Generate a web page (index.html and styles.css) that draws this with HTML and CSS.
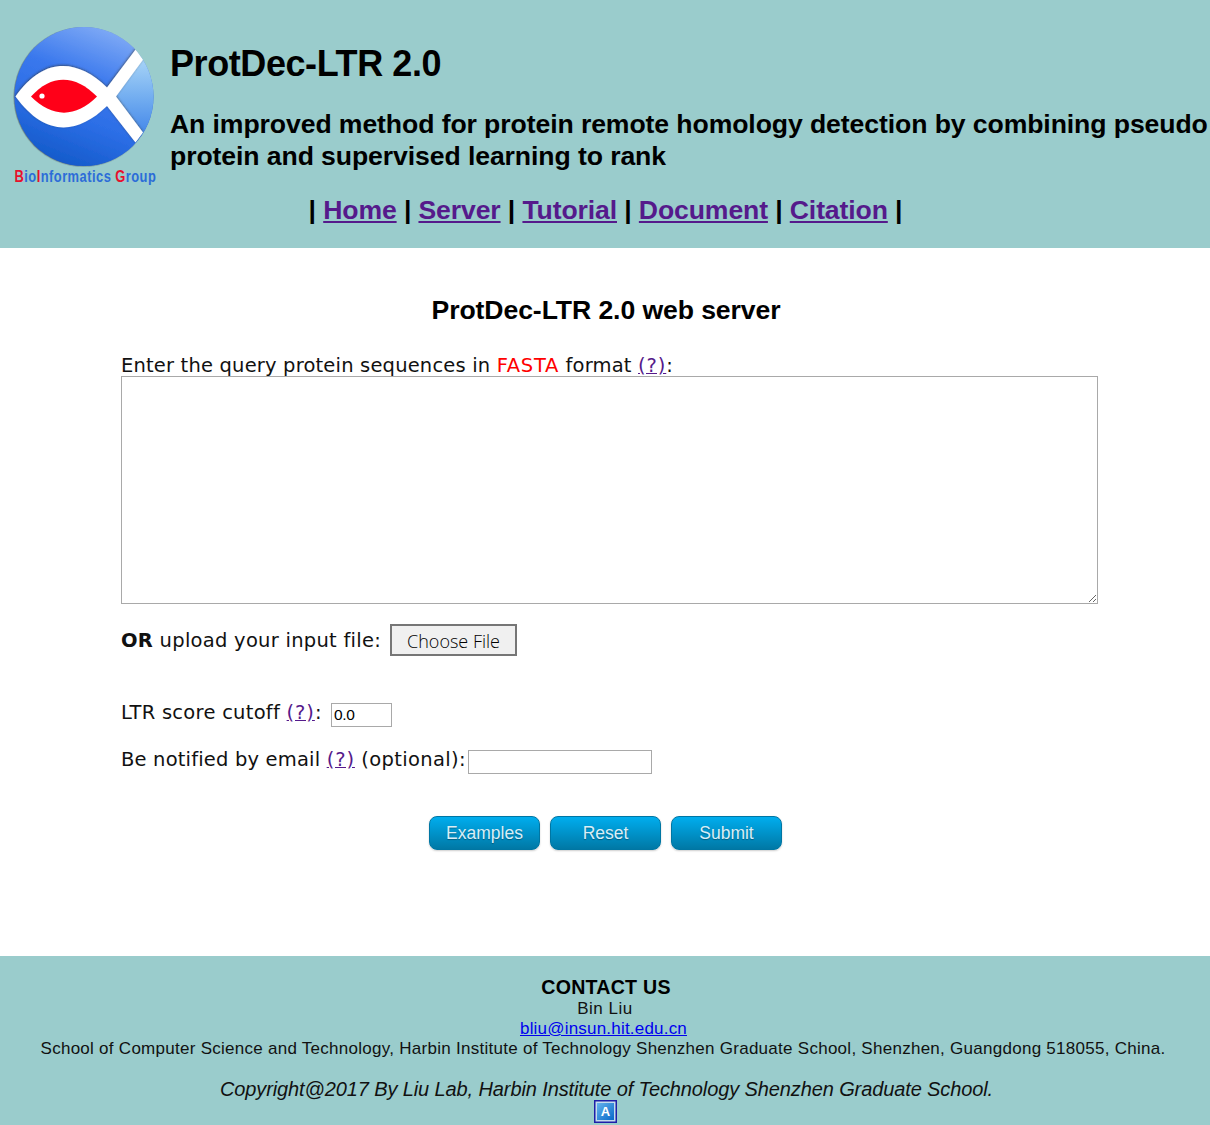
FILE: index.html
```html
<!DOCTYPE html>
<html lang="en">
<head>
<meta charset="utf-8">
<title>ProtDec-LTR 2.0</title>
<link rel="stylesheet" href="styles.css">
</head>
<body>
<header class="header">
  <div class="banner">
    <svg class="logo" viewBox="0 0 156 172" width="156" height="172" role="img" aria-label="BioInformatics Group">
      <defs>
        <linearGradient id="globe" x1="0.7" y1="0" x2="0.3" y2="1">
          <stop offset="0" stop-color="#82acf6"/>
          <stop offset="0.38" stop-color="#3a78ed"/>
          <stop offset="0.65" stop-color="#2c6ee6"/>
          <stop offset="1" stop-color="#1259c8"/>
        </linearGradient>
        <linearGradient id="sea" x1="0" y1="0" x2="0" y2="1">
          <stop offset="0" stop-color="#a9d5f7"/>
          <stop offset="0.5" stop-color="#72adf0"/>
          <stop offset="1" stop-color="#3f83e8"/>
        </linearGradient>
        <clipPath id="disc"><circle cx="84" cy="76.500" r="69.5"/></clipPath>
        <filter id="soft" x="-10%" y="-10%" width="120%" height="120%"><feDropShadow dx="-0.3" dy="-0.8" stdDeviation="0.8" flood-color="#333" flood-opacity="0.7"/></filter>
        <filter id="edge" x="-10%" y="-10%" width="120%" height="120%"><feDropShadow dx="-0.5" dy="0.3" stdDeviation="0.6" flood-color="#333" flood-opacity="0.8"/></filter>
      </defs>
      <circle cx="84" cy="76.500" r="69.5" fill="url(#globe)" filter="url(#edge)"/>
      <g clip-path="url(#disc)">
        <path d="M115 77 143 38H160V118H143Z" fill="url(#sea)"/>
        <g filter="url(#soft)">
          <path d="M15.500 76.500C43 37 77 38 107 67.500L136 29 143.500 39 116 76.500 143 112.500 135.500 122.500 107 86C77 115 45 117 15.500 76.500Z" fill="#fff"/>
        </g>
        <path d="M31 76.500C51 54 75 54 97 76.500C76 98 52 98 31 76.500Z" fill="#ff0018"/>
        <circle cx="42" cy="76" r="2.600" fill="#fff"/>
      </g>
      <text class="logo-text" transform="translate(14.500 161.500) scale(0.76 1)" x="0" y="0" textLength="186" lengthAdjust="spacing"><tspan class="red">B</tspan>io<tspan class="red">I</tspan>nformatics <tspan class="red">G</tspan>roup</text>
    </svg>
    <div class="titles">
      <h1 class="title">ProtDec-LTR 2.0</h1>
      <h2 class="subtitle">An improved method for protein remote homology detection by combining pseudo<br>protein and supervised learning to rank</h2>
    </div>
  </div>
  <nav class="nav">| <a href="#">Home</a> | <a href="#">Server</a> | <a href="#">Tutorial</a> | <a href="#">Document</a> | <a href="#">Citation</a> |</nav>
</header>
<main class="main">
  <h2 class="heading">ProtDec-LTR 2.0 web server</h2>
  <form class="form">
    <label class="row row-query" for="query"><span>Enter the query protein sequences in <span class="fasta">FASTA</span> format <a href="#">(?)</a>:</span></label>
    <textarea class="query" id="query"></textarea>
    <div class="row row-file"><span class="t-file"><b>OR</b> upload your input file:</span><button class="choose" type="button">Choose File</button></div>
    <div class="row row-cutoff"><span class="t-cutoff">LTR score cutoff <a href="#">(?)</a>:</span><input class="cutoff" value="0.0"></div>
    <div class="row row-email"><span class="t-email">Be notified by email <a href="#">(?)</a> <span class="optional">(optional):</span></span><input class="email"></div>
    <div class="actions">
      <button class="btn" type="button">Examples</button>
      <button class="btn" type="button">Reset</button>
      <button class="btn" type="button">Submit</button>
    </div>
  </form>
</main>
<footer class="footer">
  <div class="contact">CONTACT US</div>
  <div class="line name">Bin Liu</div>
  <div class="line mail"><a href="#">bliu@insun.hit.edu.cn</a></div>
  <div class="line school">School of Computer Science and Technology, Harbin Institute of Technology Shenzhen Graduate School, Shenzhen, Guangdong 518055, China.</div>
  <div class="copy">Copyright@2017 By Liu Lab, Harbin Institute of Technology Shenzhen Graduate School.</div>
  <svg class="badge" width="23" height="23" viewBox="0 0 23 23">
    <defs><linearGradient id="tile" x1="0" y1="0" x2="1" y2="1"><stop offset="0" stop-color="#64b2ec"/><stop offset="1" stop-color="#0868c9"/></linearGradient></defs>
    <rect x="0.750" y="0.750" width="21.500" height="21.500" fill="#c5dced" stroke="#1e1ea8" stroke-width="1.500"/>
    <rect x="3" y="3" width="17" height="17" fill="url(#tile)"/>
    <text class="badge-text" x="11.500" y="16" text-anchor="middle">A</text>
  </svg>
</footer>
</body>
</html>
```
FILE: styles.css
```css
* { box-sizing: border-box; }
body {
  margin: 0;
  min-height: 1125px;
  display: flex;
  flex-direction: column;
  background: #fff;
  color: #000;
  font-family: "Liberation Sans", Arial, sans-serif;
}
h1, h2 { margin: 0; font-weight: bold; }
a { color: #551a8b; text-decoration: underline; }
.header { height: 248px; background: #9acccc; overflow: hidden; }
.banner { display: flex; height: 190px; padding-top: 20px; }
.logo { flex: none; }
.logo-text { font: bold 17px "Liberation Sans", Arial, sans-serif; fill: #2c6cd8; }
.red { fill: #e8102c; }
.titles { padding: 23px 0 0 14px; white-space: nowrap; }
.title { font-size: 36px; line-height: 42px; letter-spacing: -0.42px; }
.subtitle { margin-top: 23px; font-size: 26.600px; line-height: 32px; letter-spacing: -0.09px; }
.nav { height: 40px; padding-left: 1px; text-align: center; font-weight: bold; font-size: 26.600px; line-height: 40px; letter-spacing: -0.12px; }
.main { height: 708px; padding: 46px 0 0 121px; }
.heading { margin-left: -121px; padding-left: 2px; text-align: center; font-size: 26.600px; line-height: 32px; letter-spacing: -0.09px; }
.form { width: 977px; font-family: "DejaVu Sans", Verdana, sans-serif; font-size: 19.500px; }
.form a { letter-spacing: 0.9px; }
.row { display: flex; align-items: center; white-space: nowrap; color: #111; }
.row-query { margin-top: 28px; height: 23px; letter-spacing: 0.18px; }
.fasta { color: #f00; letter-spacing: 0.7px; }
.query { display: block; width: 977px; height: 228px; margin: -1px 0 0; border: 1.500px solid #a9a9a9; resize: both; outline: 0; }
.row-file { height: 32px; margin-top: 20px; }
.t-file { width: 269px; letter-spacing: 0.27px; }
.choose { width: 127px; height: 32px; padding: 1px 0 0; border: 2px solid #767676; background: #f0f0f0; font: 300 18px "Open Sans", sans-serif; letter-spacing: 0; }
.row-cutoff { height: 24px; margin-top: 47px; }
.t-cutoff { width: 210px; padding-bottom: 5px; letter-spacing: 0.27px; }
.cutoff, .email { height: 24px; border: 1.500px solid #a9a9a9; padding: 0 2px; font: 15.500px "Liberation Sans", Arial, sans-serif; letter-spacing: -0.3px; border-radius: 0; }
.cutoff { width: 61px; }
.row-email { height: 24px; margin-top: 23px; }
.t-email { width: 347px; padding-bottom: 5px; letter-spacing: 0.18px; }
.optional { letter-spacing: 0.35px; }
.email { width: 184px; }
.actions { display: flex; gap: 10px; margin: 42px 0 0 308px; }
.btn { width: 111px; height: 34px; padding: 0; border: 1px solid #0076a3; border-radius: 8px; background: linear-gradient(#00adee, #0078a5); color: #d9eef7; font: 17.500px "Liberation Sans", Arial, sans-serif; text-shadow: 0 1px 1px rgba(0,0,0,.3); box-shadow: 0 1px 2px rgba(0,0,0,.2); }
.footer { height: 169px; padding-top: 20px; background: #9acccc; display: flex; flex-direction: column; align-items: center; white-space: nowrap; overflow: hidden; }
.contact { font-weight: bold; font-size: 19.600px; line-height: 23px; margin-left: 2px; letter-spacing: 0.25px; }
.line { font-size: 17px; line-height: 20px; letter-spacing: 0.27px; color: #111; }
.name { letter-spacing: 0.5px; }
.mail { margin-right: 3px; letter-spacing: 0.2px; }
.mail a { color: #00e; }
.school { margin-right: 4px; }
.copy { margin: 19px 0 0 3px; font-style: italic; font-size: 20px; line-height: 23px; letter-spacing: -0.11px; color: #111; }
.badge { flex: none; margin: -1px 0 0 1px; }
.badge-text { font: bold 13px "Liberation Sans", Arial, sans-serif; fill: #fff; }
```
